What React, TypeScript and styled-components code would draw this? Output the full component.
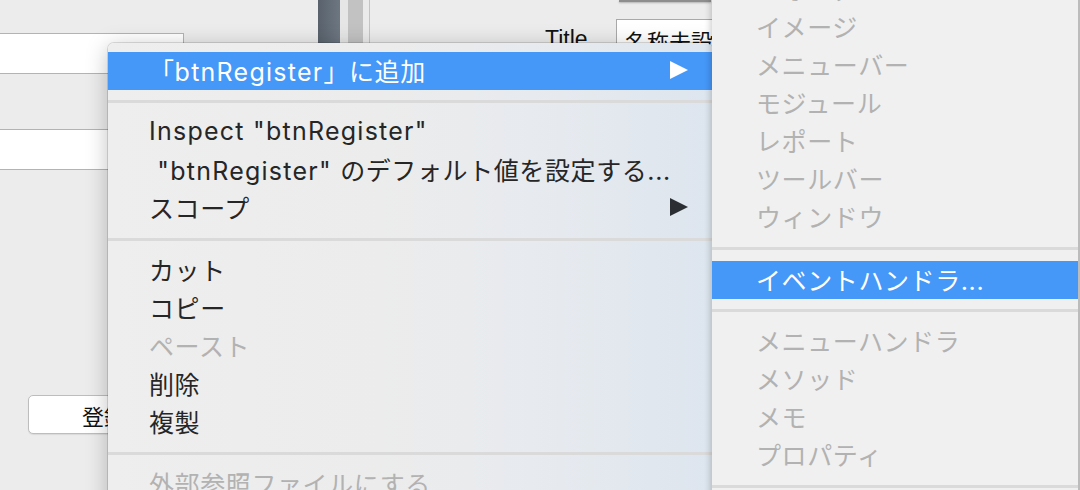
import type { ReactNode } from "react";
import styled, { createGlobalStyle } from "styled-components";

const GlobalStyle = createGlobalStyle`
  html, body {
    margin: 0;
    padding: 0;
    background: #ececec;
  }
  body {
    font-family: Inter, "Noto Sans CJK JP", sans-serif;
  }
`;

const Page = styled.div`
  position: relative;
  width: 1080px;
  height: 490px;
  overflow: hidden;
  background: #ececec;
  display: flex;
`;

const LeftPane = styled.div`
  width: 318px;
  flex-shrink: 0;
  display: flex;
  flex-direction: column;
  padding-top: 33px;
  box-sizing: border-box;
`;

const TextField = styled.div<{ $top: number }>`
  box-sizing: border-box;
  width: 185px;
  height: 41px;
  margin: ${(p) => p.$top}px 0 0 -1px;
  background: #fff;
  border: 1px solid #b3b3b3;
`;

const PushButton = styled.div`
  box-sizing: border-box;
  width: 152px;
  height: 39px;
  margin: 225px 0 0 28px;
  background: #fff;
  border: 1px solid #bdbdbd;
  border-radius: 5px;
  box-shadow: 0 1px 1px rgba(0, 0, 0, 0.08);
  display: flex;
  align-items: center;
  justify-content: center;
  font-family: "Noto Sans CJK JP", sans-serif;
  font-size: 22px;
  color: #111;
`;

const SplitterBar = styled.div`
  width: 22px;
  flex-shrink: 0;
  background: linear-gradient(90deg, #59626c, #6d7782);
`;

const Strip = styled.div<{ $w: number; $bg: string }>`
  width: ${(p) => p.$w}px;
  flex-shrink: 0;
  background: ${(p) => p.$bg};
`;

const RightPane = styled.div`
  flex: 1;
  display: flex;
  flex-direction: column;
`;

const PopupEdge = styled.div`
  width: 92px;
  height: 2px;
  margin-left: 249px;
  background: #8e8e8e;
  box-shadow: 0 1px 2px rgba(0, 0, 0, 0.25);
`;

const TitleRow = styled.div`
  display: flex;
  align-items: flex-start;
  padding: 17px 0 0 175px;
`;

const TitleLabel = styled.div`
  width: 71px;
  line-height: 41px;
  font-family: "Liberation Sans", sans-serif;
  font-size: 23px;
  color: #111;
`;

const TitleField = styled.div`
  box-sizing: border-box;
  width: 240px;
  height: 41px;
  padding: 4px 0 0 8px;
  background: #fff;
  border: 1px solid #a9a9a9;
  font-family: "Noto Sans CJK JP", sans-serif;
  font-size: 22px;
  color: #111;
  white-space: nowrap;
`;

const ContextMenu = styled.div`
  position: absolute;
  left: 108px;
  top: 43px;
  width: 604px;
  height: 470px;
  box-sizing: border-box;
  padding-top: 9px;
  border-radius: 6px 6px 0 0;
  background: linear-gradient(
    90deg,
    #eeeeee 0%,
    #ececec 45%,
    #e6eaef 75%,
    #dde5ee 100%
  );
  box-shadow: 0 0 0 1px rgba(0, 0, 0, 0.12), 0 4px 22px rgba(0, 0, 0, 0.25);
`;

const SubMenu = styled.div`
  position: absolute;
  left: 712px;
  top: -30px;
  width: 366px;
  height: 560px;
  background: #f0f0f0;
  border-right: 2px solid #bcbcbc;
  box-shadow: -2px 0 6px rgba(0, 0, 0, 0.18);
`;

const MenuItem = styled.div<{ $active?: boolean; $disabled?: boolean; $indent: number }>`
  box-sizing: border-box;
  height: 38px;
  display: flex;
  align-items: center;
  padding: 0 24px 2px ${(p) => p.$indent}px;
  font-size: 25px;
  letter-spacing: 0.6px;
  white-space: pre;
  background: ${(p) => (p.$active ? "#4597f8" : "transparent")};
  color: ${(p) => (p.$active ? "#fff" : p.$disabled ? "#b2b2b2" : "#262626")};
`;

const ItemLabel = styled.span`
  flex: 1;
`;

const Latin = styled.span`
  letter-spacing: 1.25px;
`;

const Separator = styled.div<{ $h: number }>`
  height: ${(p) => p.$h}px;
  display: flex;
  align-items: center;

  &::after {
    content: "";
    flex: 1;
    height: 3px;
    background: #dadada;
  }
`;

const Arrow = ({ color }: { color: string }) => (
  <svg width="18" height="18" viewBox="0 0 18 18">
    <polygon points="0,0 18,9 0,18" fill={color} />
  </svg>
);

type Entry =
  | { sep: number }
  | { text: ReactNode; active?: boolean; disabled?: boolean; sub?: boolean };

const mainItems: Entry[] = [
  {
    text: (
      <>
        「<Latin>btnRegister</Latin>」に追加
      </>
    ),
    active: true,
    sub: true,
  },
  { sep: 23 },
  { text: <Latin>Inspect "btnRegister"</Latin> },
  {
    text: (
      <>
        <Latin> "btnRegister" </Latin>のデフォルト値を設定する...
      </>
    ),
  },
  { text: "スコープ", sub: true },
  { sep: 24 },
  { text: "カット" },
  { text: "コピー" },
  { text: "ペースト", disabled: true },
  { text: "削除" },
  { text: "複製" },
  { sep: 24 },
  { text: "外部参照ファイルにする", disabled: true },
];

const subItems: Entry[] = [
  { text: "フォルダ", disabled: true },
  { text: "イメージ", disabled: true },
  { text: "メニューバー", disabled: true },
  { text: "モジュール", disabled: true },
  { text: "レポート", disabled: true },
  { text: "ツールバー", disabled: true },
  { text: "ウィンドウ", disabled: true },
  { sep: 25 },
  { text: "イベントハンドラ...", active: true },
  { sep: 23 },
  { text: "メニューハンドラ", disabled: true },
  { text: "メソッド", disabled: true },
  { text: "メモ", disabled: true },
  { text: "プロパティ", disabled: true },
  { sep: 24 },
];

const MenuList = ({ items, indent }: { items: Entry[]; indent: number }) => (
  <>
    {items.map((it, i) =>
      "sep" in it ? (
        <Separator key={i} $h={it.sep} />
      ) : (
        <MenuItem key={i} $active={it.active} $disabled={it.disabled} $indent={indent}>
          <ItemLabel>{it.text}</ItemLabel>
          {it.sub && <Arrow color={it.active ? "#fff" : "#2b2f34"} />}
        </MenuItem>
      )
    )}
  </>
);

export default function App() {
  return (
    <>
      <GlobalStyle />
      <Page>
        <LeftPane>
          <TextField $top={0} />
          <TextField $top={55} />
          <PushButton>登録</PushButton>
        </LeftPane>
        <SplitterBar />
        <Strip $w={8} $bg="#e6e6e6" />
        <Strip $w={15} $bg="#c2c2c2" />
        <Strip $w={6} $bg="#ebebeb" />
        <Strip $w={1} $bg="#c4c4c4" />
        <RightPane>
          <PopupEdge />
          <TitleRow>
            <TitleLabel>Title</TitleLabel>
            <TitleField>名称未設定</TitleField>
          </TitleRow>
        </RightPane>

        <ContextMenu>
          <MenuList items={mainItems} indent={41} />
        </ContextMenu>
        <SubMenu>
          <MenuList items={subItems} indent={44} />
        </SubMenu>
      </Page>
    </>
  );
}
